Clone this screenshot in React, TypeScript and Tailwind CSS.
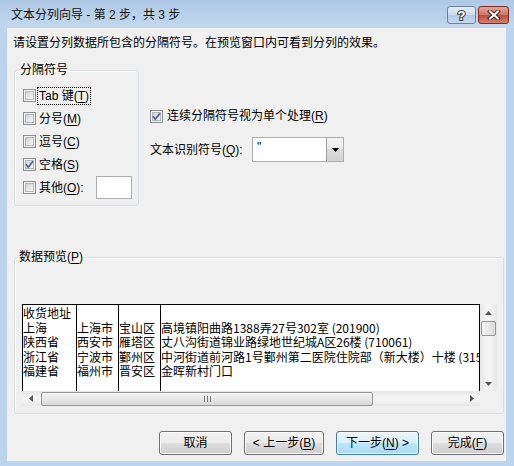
import React from 'react';

// underlined access key inside a label
const Key = ({ children }: { children: React.ReactNode }) => (
  <span className="underline underline-offset-[2px]">{children}</span>
);

const CheckBox = ({ checked = false }: { checked?: boolean }) => (
  <span className="relative flex h-[13px] w-[13px] shrink-0 items-center justify-center border border-[#8e8f8f] bg-[#f4f4f4]">
    <span className="h-[9px] w-[9px] border border-[#b4b8be] bg-[linear-gradient(135deg,#d0d3d8,#f7f7f7)]" />
    {checked && (
      <svg viewBox="0 0 13 13" className="absolute -left-px -top-px h-[13px] w-[13px]">
        <path d="M3 6.3 5.3 9.2 10 3.2" fill="none" stroke="#4b5d93" strokeWidth="1.7" />
      </svg>
    )}
  </span>
);

const Option = ({
  checked,
  focus,
  children,
}: {
  checked?: boolean;
  focus?: boolean;
  children: React.ReactNode;
}) => (
  <div className="flex h-[23px] items-center">
    <CheckBox checked={checked} />
    <span
      className={`ml-px border border-dotted px-px leading-[16px] ${
        focus ? 'border-black' : 'border-transparent'
      }`}
    >
      {children}
    </span>
  </div>
);

const Arrow = ({ dir }: { dir: 'up' | 'down' | 'left' | 'right' }) => {
  const pts = {
    up: '0,4 3.5,0 7,4',
    down: '0,0 3.5,4 7,0',
    left: '4,0 0,3.5 4,7',
    right: '0,0 4,3.5 0,7',
  }[dir];
  const horiz = dir === 'left' || dir === 'right';
  return (
    <svg viewBox={horiz ? '0 0 4 7' : '0 0 7 4'} className={horiz ? 'h-[7px] w-[4px]' : 'h-[4px] w-[7px]'}>
      <polygon points={pts} fill="#555" />
    </svg>
  );
};

const Button = ({ children, hot }: { children: React.ReactNode; hot?: boolean }) => (
  <div
    className={`flex h-[24px] items-center justify-center rounded-[3px] border shadow-[inset_0_0_0_1px_#fbfbfb] ${
      hot
        ? 'border-[#3c7fb1] bg-[linear-gradient(#eaf6fd_0%,#d9f0fc_50%,#bee6fd_50%,#a7d9f5_100%)]'
        : 'border-[#707070] bg-[linear-gradient(#f2f2f2_0%,#ebebeb_50%,#dddddd_50%,#cfcfcf_100%)]'
    }`}
  >
    {children}
  </div>
);

const rows = [
  ['收货地址', '', '', ''],
  ['上海', '上海市', '宝山区', '高境镇阳曲路1388弄27号302室 (201900)'],
  ['陕西省', '西安市', '雁塔区', '丈八沟街道锦业路绿地世纪城A区26楼 (710061)'],
  ['浙江省', '宁波市', '鄞州区', '中河街道前河路1号鄞州第二医院住院部（新大楼）十楼 (315000)'],
  ['福建省', '福州市', '晋安区', '金晖新村门口'],
];

const colWidths = ['w-[54px]', 'w-[42px]', 'w-[42px]', 'flex-1'];

export default function App() {
  return (
    <div className="flex h-[466px] w-[514px] flex-col bg-[#bcd4ee] font-['Liberation_Sans','Noto_Sans_CJK_SC',sans-serif] text-[12px] leading-[16px] text-black">
      {/* title bar */}
      <div className="flex h-[28px] shrink-0 items-start bg-[linear-gradient(#aec8e5,#c3d8ef)] pl-[11px] pr-[5px]">
        <div className="mt-[7px] flex-1 text-[#111]">文本分列向导 - 第 2 步，共 3 步</div>
        <div className="mt-[6px] flex gap-[2px]">
          <div className="flex h-[18px] w-[29px] items-center justify-center rounded-[3px] border border-[#6a83a2] bg-[linear-gradient(#e3edf8_0%,#cbdcef_50%,#b4c9e3_51%,#c6d8ee_100%)]">
            <span className="text-[13px] font-bold leading-none text-white [-webkit-text-stroke:2px_#404040] [paint-order:stroke]">
              ?
            </span>
          </div>
          <div className="flex h-[18px] w-[31px] items-center justify-center rounded-[3px] border border-[#7a2b24] bg-[linear-gradient(#e8a497_0%,#d47464_50%,#c0473a_51%,#d97f6e_100%)]">
            <svg viewBox="0 0 14 10" className="h-[10px] w-[14px]">
              <path d="M3 1.5 11 8.5M11 1.5 3 8.5" stroke="#3a2a2a" strokeWidth="4" strokeLinecap="square" />
              <path d="M3 1.5 11 8.5M11 1.5 3 8.5" stroke="#fff" strokeWidth="2" strokeLinecap="square" />
            </svg>
          </div>
        </div>
      </div>

      {/* client area */}
      <div className="mb-[5px] ml-[7px] mr-[8px] flex flex-1 flex-col bg-[#f0f0f0] pt-[7px]">
        <div className="pl-[6px]">请设置分列数据所包含的分隔符号。在预览窗口内可看到分列的效果。</div>

        <div className="mt-[11px] flex">
          <fieldset className="ml-[7px] h-[144px] w-[125px] rounded-[3px] border border-[#d5dfe5] shadow-[inset_1px_1px_0_#fff]">
            <legend className="ml-[4px] px-px leading-[16px]">分隔符号</legend>
            <div className="pl-[8px] pt-[6px]">
              <Option focus>
                Tab 键(<Key>T</Key>)
              </Option>
              <Option>
                分号(<Key>M</Key>)
              </Option>
              <Option>
                逗号(<Key>C</Key>)
              </Option>
              <Option checked>
                空格(<Key>S</Key>)
              </Option>
              <div className="flex h-[23px] items-center">
                <CheckBox />
                <span className="ml-px border border-transparent px-px">
                  其他(<Key>O</Key>):
                </span>
                <div className="ml-auto mr-[6px] h-[23px] w-[36px] border border-[#abadb3] bg-white" />
              </div>
            </div>
          </fieldset>

          <div className="ml-[11px] flex flex-col pt-[46px]">
            <div className="flex h-[16px] items-center">
              <CheckBox checked />
              <span className="ml-[4px]">
                连续分隔符号视为单个处理(<Key>R</Key>)
              </span>
            </div>
            <div className="mt-[13px] flex items-center">
              <span className="w-[102px]">
                文本识别符号(<Key>Q</Key>):
              </span>
              <div className="flex h-[25px] w-[92px] border border-[#abadb3] bg-white">
                <span className="flex-1 pl-[4px] pt-[1px]">"</span>
                <span className="flex w-[17px] items-center justify-center border-l border-[#a0a0a0] bg-[linear-gradient(#f3f3f3_0%,#ebebeb_50%,#dddddd_50%,#d1d1d1_100%)]">
                  <svg viewBox="0 0 7 4" className="h-[4px] w-[7px]">
                    <polygon points="0,0 3.5,4 7,0" fill="#000" />
                  </svg>
                </span>
              </div>
            </div>
          </div>
        </div>

        <fieldset className="ml-[7px] mt-[43px] h-[165px] w-[490px] rounded-[3px] border border-[#d5dfe5] shadow-[inset_1px_1px_0_#fff]">
          <legend className="ml-[3px] px-px leading-[16px]">
            数据预览(<Key>P</Key>)
          </legend>
          <div className="pl-[7px] pt-[39px]">
            <div className="grid h-[102px] w-[475px] grid-cols-[458px_17px] grid-rows-[87px_15px]">
              {/* preview table */}
              <div className="flex overflow-hidden border-x border-t border-black bg-white font-['Noto_Sans_CJK_SC',sans-serif] leading-[14.5px]">
                {colWidths.map((w, c) => (
                  <div
                    key={c}
                    className={`${w} shrink-0 overflow-hidden whitespace-nowrap pt-[1px] ${c < 3 ? 'border-r border-black' : ''}`}
                  >
                    {rows.map((r, i) => (
                      <div key={i} className="h-[14.5px]">
                        {r[c]}
                      </div>
                    ))}
                  </div>
                ))}
              </div>

              {/* vertical scrollbar */}
              <div className="flex flex-col items-center bg-[linear-gradient(90deg,#e6e6e6,#f4f4f4_40%,#f4f4f4_60%,#e6e6e6)]">
                <div className="flex h-[17px] items-center">
                  <Arrow dir="up" />
                </div>
                <div className="h-[15px] w-[15px] rounded-[2px] border border-[#979797] bg-[linear-gradient(90deg,#f4f4f4,#e8e8e8_50%,#d8d8d8)]" />
                <div className="flex-1" />
                <div className="flex h-[15px] items-center">
                  <Arrow dir="down" />
                </div>
              </div>

              {/* horizontal scrollbar */}
              <div className="flex items-center bg-[linear-gradient(#e6e6e6,#f4f4f4_40%,#f4f4f4_60%,#e6e6e6)]">
                <div className="flex w-[17px] justify-center">
                  <Arrow dir="left" />
                </div>
                <div className="ml-[2px] flex h-[14px] w-[332px] items-center justify-center gap-[2px] rounded-[2px] border border-[#979797] bg-[linear-gradient(#f4f4f4,#e8e8e8_50%,#d8d8d8)]">
                  <span className="h-[6px] w-px bg-[#777]" />
                  <span className="h-[6px] w-px bg-[#777]" />
                  <span className="h-[6px] w-px bg-[#777]" />
                </div>
                <div className="flex-1" />
                <div className="flex w-[17px] justify-center">
                  <Arrow dir="right" />
                </div>
              </div>
              <div className="bg-[#f0f0f0]" />
            </div>
          </div>
        </fieldset>

        <div className="mt-[17px] flex justify-end gap-[12px] pr-[2px]">
          <div className="w-[73px]">
            <Button>取消</Button>
          </div>
          <div className="w-[80px]">
            <Button>
              &lt; 上一步(<Key>B</Key>)
            </Button>
          </div>
          <div className="w-[83px]">
            <Button hot>
              下一步(<Key>N</Key>) &gt;
            </Button>
          </div>
          <div className="w-[73px]">
            <Button>
              完成(<Key>F</Key>)
            </Button>
          </div>
        </div>
      </div>
    </div>
  );
}
